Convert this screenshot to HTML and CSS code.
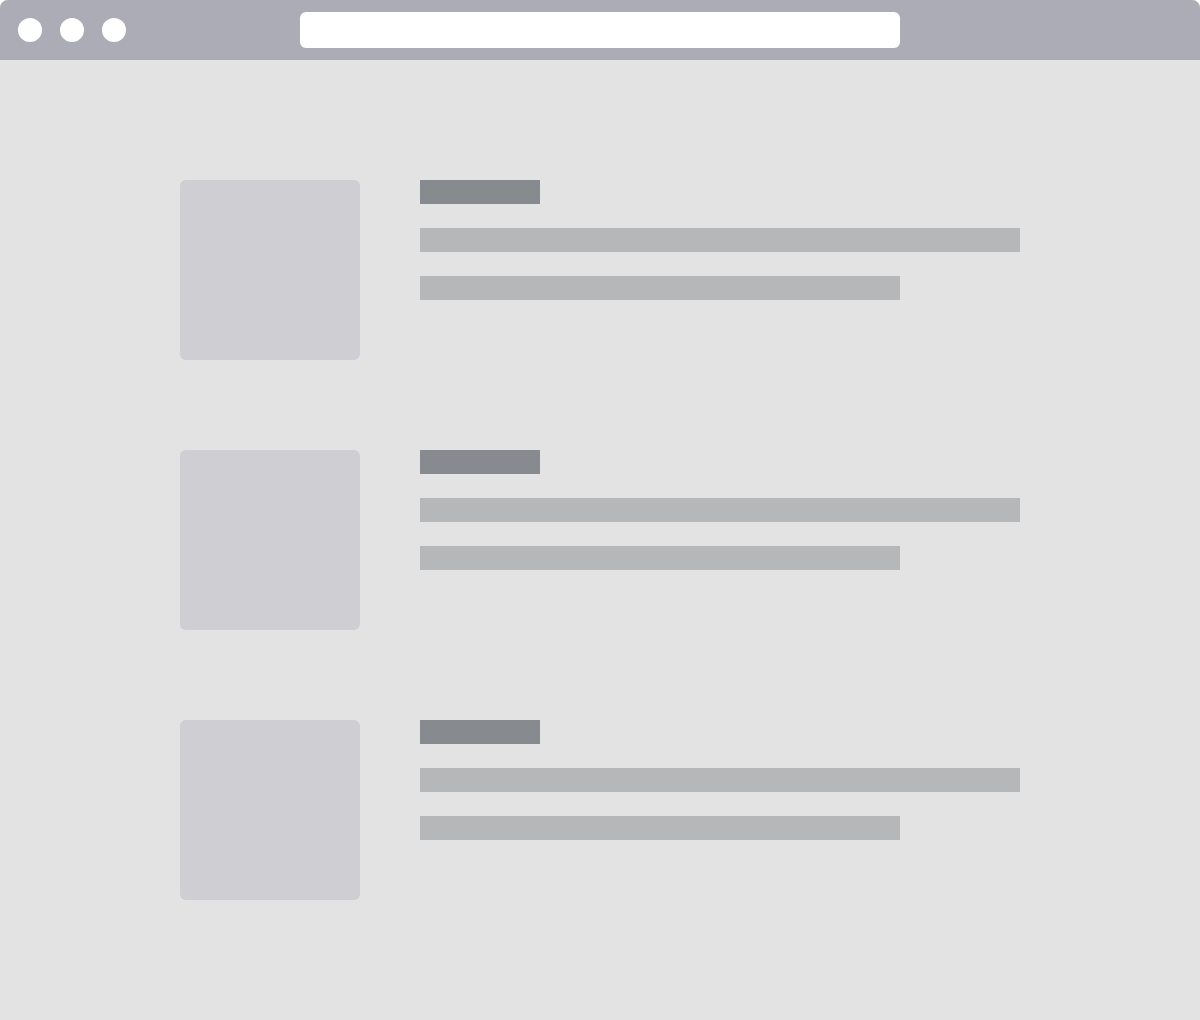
FILE: index.html
```html
<!DOCTYPE html>
<html lang="en">

<head>
    <meta charset="UTF-8">
    <meta name="viewport" content="width=device-width, initial-scale=1.0">
    <title>Wireframe</title>
    <link rel="stylesheet" href="styles.css">
</head>

<body>

    <div class="window">
        <header class="topbar">
            <div class="dots">
                <span class="dot"></span>
                <span class="dot"></span>
                <span class="dot"></span>
            </div>
            <div class="address"></div>
        </header>

        <main class="list">
            <div class="item">
                <div class="thumb"></div>
                <div class="lines">
                    <div class="bar title"></div>
                    <div class="bar long"></div>
                    <div class="bar short"></div>
                </div>
            </div>
            <div class="item">
                <div class="thumb"></div>
                <div class="lines">
                    <div class="bar title"></div>
                    <div class="bar long"></div>
                    <div class="bar short"></div>
                </div>
            </div>
            <div class="item">
                <div class="thumb"></div>
                <div class="lines">
                    <div class="bar title"></div>
                    <div class="bar long"></div>
                    <div class="bar short"></div>
                </div>
            </div>
        </main>
    </div>

</body>

</html>
```

FILE: styles.css
```css
* {
    padding: 0;
    margin: 0;
    box-sizing: border-box;
}

body {
    background-color: #ffffff;
    width: 1200px;
    height: 1020px;
    overflow: hidden;
}

.window {
    width: 1200px;
    height: 1020px;
    background-color: #e3e3e3;
    border-radius: 8px 8px 0 0;
    overflow: hidden;
}

.topbar {
    height: 60px;
    background-color: #abacb5;
    display: flex;
    align-items: center;
    padding-left: 18px;
}

.dots {
    display: flex;
    gap: 18px;
}

.dot {
    width: 24px;
    height: 24px;
    border-radius: 50%;
    background-color: #ffffff;
}

.address {
    width: 600px;
    height: 36px;
    margin-left: 174px;
    background-color: #ffffff;
    border-radius: 6px;
}

.list {
    display: flex;
    flex-direction: column;
    gap: 90px;
    padding: 120px 180px;
}

.item {
    display: flex;
    gap: 60px;
}

.thumb {
    width: 180px;
    height: 180px;
    background-color: #cfcfd3;
    border-radius: 6px;
}

.lines {
    display: flex;
    flex-direction: column;
    gap: 24px;
}

.bar {
    height: 24px;
    background-color: #b6b7b9;
}

.bar.title {
    width: 120px;
    background-color: #878a8f;
}

.bar.long {
    width: 600px;
}

.bar.short {
    width: 480px;
}
```
